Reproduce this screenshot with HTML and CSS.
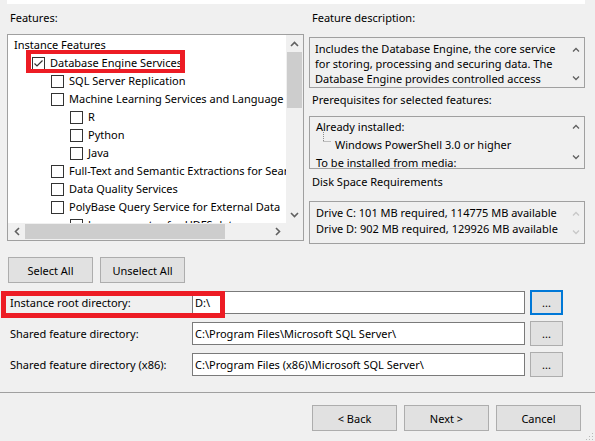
FILE: index.html
```html
<!DOCTYPE html>
<html>
<head>
<meta charset="utf-8">
<link rel="stylesheet" href="styles.css">
</head>
<body>
<div class="window">
  <div class="topband"></div>
  <div class="panes">
    <div class="left">
      <div class="label lbl-features">Features:</div>
      <div class="tree">
        <div class="tree-content">
          <div class="row lvl0">Instance Features</div>
          <div class="row lvl1"><span class="cb"><svg width="13" height="13" viewBox="0 0 13 13"><polyline points="2.5,6.5 5,9 10.5,3.5" fill="none" stroke="#333" stroke-width="1.2"/></svg></span>Database Engine Services</div>
          <div class="row lvl2"><span class="cb"></span>SQL Server Replication</div>
          <div class="row lvl2"><span class="cb"></span>Machine Learning Services and Language Extensions</div>
          <div class="row lvl3"><span class="cb"></span>R</div>
          <div class="row lvl3"><span class="cb"></span>Python</div>
          <div class="row lvl3"><span class="cb"></span>Java</div>
          <div class="row lvl2"><span class="cb"></span>Full-Text and Semantic Extractions for Search</div>
          <div class="row lvl2"><span class="cb"></span>Data Quality Services</div>
          <div class="row lvl2"><span class="cb"></span>PolyBase Query Service for External Data</div>
          <div class="row lvl3"><span class="cb"></span>Java connector for HDFS data sources</div>
        </div>
        <div class="vscroll">
          <div class="sbtn"><svg width="9" height="6" viewBox="0 0 9 6"><polyline points="1,5 4.5,1.5 8,5" fill="none" stroke="#606060" stroke-width="1.6"/></svg></div>
          <div class="vtrack"><div class="vthumb"></div></div>
          <div class="sbtn"><svg width="9" height="6" viewBox="0 0 9 6"><polyline points="1,1 4.5,4.5 8,1" fill="none" stroke="#606060" stroke-width="1.6"/></svg></div>
        </div>
        <div class="hscroll">
          <div class="sbtn"><svg width="6" height="9" viewBox="0 0 6 9"><polyline points="5,1 1.5,4.5 5,8" fill="none" stroke="#606060" stroke-width="1.6"/></svg></div>
          <div class="htrack"><div class="hthumb"></div></div>
          <div class="sbtn"><svg width="6" height="9" viewBox="0 0 6 9"><polyline points="1,1 4.5,4.5 1,8" fill="none" stroke="#606060" stroke-width="1.6"/></svg></div>
        </div>
        <div class="corner"></div>
      </div>
    </div>
    <div class="right">
      <div class="label lbl-desc">Feature description:</div>
      <div class="box box-desc">
        <div class="box-text">Includes the Database Engine, the core service<br>for storing, processing and securing data. The<br>Database Engine provides controlled access</div>
        <div class="arrows">
          <svg width="8" height="5" viewBox="0 0 8 5"><polyline points="1,4.5 4,1.5 7,4.5" fill="none" stroke="#606060" stroke-width="1.3"/></svg>
          <svg width="8" height="5" viewBox="0 0 8 5"><polyline points="1,0.5 4,3.5 7,0.5" fill="none" stroke="#606060" stroke-width="1.3"/></svg>
        </div>
      </div>
      <div class="label lbl-prereq">Prerequisites for selected features:</div>
      <div class="box box-prereq">
        <div class="box-text">
          <div class="pr-row">Already installed:</div>
          <div class="pr-row pr-child"><svg class="dots" width="12" height="18" viewBox="0 0 12 18"><path d="M3.5 0 V9.5 M3.5 9.5 H11" fill="none" stroke="#8a8a8a" stroke-width="1" stroke-dasharray="1 1"/></svg>Windows PowerShell 3.0 or higher</div>
          <div class="pr-row">To be installed from media:</div>
        </div>
        <div class="arrows arrows-prereq">
          <svg width="8" height="5" viewBox="0 0 8 5"><polyline points="1,4.5 4,1.5 7,4.5" fill="none" stroke="#606060" stroke-width="1.3"/></svg>
          <svg width="8" height="5" viewBox="0 0 8 5"><polyline points="1,0.5 4,3.5 7,0.5" fill="none" stroke="#606060" stroke-width="1.3"/></svg>
        </div>
      </div>
      <div class="label lbl-disk">Disk Space Requirements</div>
      <div class="box box-disk">
        <div class="box-text">Drive C: 101 MB required, 114775 MB available<br>Drive D: 902 MB required, 129926 MB available</div>
        <div class="arrows arrows-disk">
          <svg width="8" height="5" viewBox="0 0 8 5"><polyline points="1,4.5 4,1.5 7,4.5" fill="none" stroke="#c8c8c8" stroke-width="1.3"/></svg>
          <svg width="8" height="5" viewBox="0 0 8 5"><polyline points="1,0.5 4,3.5 7,0.5" fill="none" stroke="#c8c8c8" stroke-width="1.3"/></svg>
        </div>
      </div>
    </div>
  </div>

  <div class="select-row">
    <button class="btn">Select All</button>
    <button class="btn">Unselect All</button>
  </div>

  <div class="dirs">
    <div class="dir-row">
      <div class="dir-label">Instance root directory:</div>
      <div class="input">D:\</div>
      <button class="btn browse focused">...</button>
    </div>
    <div class="dir-row">
      <div class="dir-label">Shared feature directory:</div>
      <div class="input">C:\Program Files\Microsoft SQL Server\</div>
      <button class="btn browse">...</button>
    </div>
    <div class="dir-row">
      <div class="dir-label">Shared feature directory (x86):</div>
      <div class="input">C:\Program Files (x86)\Microsoft SQL Server\</div>
      <button class="btn browse">...</button>
    </div>
  </div>

  <div class="separator"></div>

  <div class="footer">
    <button class="btn">&lt; Back</button>
    <button class="btn">Next &gt;</button>
    <button class="btn">Cancel</button>
  </div>

  <div class="mark mark-engine"></div>
  <div class="mark mark-root"></div>
  <svg class="grip" width="8" height="8" viewBox="0 0 8 8"><g fill="#b8b8b8"><rect x="6" y="0" width="1" height="1"/><rect x="3" y="3" width="1" height="1"/><rect x="6" y="3" width="1" height="1"/><rect x="0" y="6" width="1" height="1"/><rect x="3" y="6" width="1" height="1"/><rect x="6" y="6" width="1" height="1"/></g></svg>
</div>
</body>
</html>
```

FILE: styles.css
```css
* { box-sizing: border-box; }
html, body { margin: 0; padding: 0; }
body {
  background: #f0f0f0;
  font-family: "Noto Sans", "Open Sans", sans-serif;
  font-size: 11px;
  color: #000;
}
.window {
  position: relative;
  width: 595px;
  height: 441px;
  overflow: hidden;
  background: #f0f0f0;
}
.topband {
  margin-left: 7px;
  width: 578px;
  height: 4px;
  background: #fff;
}
.panes {
  display: flex;
  gap: 5px;
  padding-left: 7px;
}
.left { width: 297px; }
.right { width: 276px; }
.label {
  line-height: 16px;
  padding-left: 3px;
  white-space: nowrap;
}
.lbl-features { height: 30px; padding-top: 6px; }
.lbl-desc { height: 33px; padding-top: 6px; }
.lbl-prereq { height: 28px; padding-top: 4px; }
.lbl-disk { height: 32px; padding-top: 5px; }

/* tree */
.tree {
  height: 207px;
  border: 1px solid #a0a0a0;
  background: #fff;
  display: grid;
  grid-template-columns: 1fr 17px;
  grid-template-rows: 1fr 17px;
}
.tree-content {
  overflow: hidden;
  padding-top: 0;
}
.row {
  height: 18px;
  display: flex;
  align-items: center;
  white-space: nowrap;
}
.lvl0 { padding-left: 6px; }
.lvl1 { padding-left: 24px; }
.lvl2 { padding-left: 43px; }
.lvl3 { padding-left: 62px; }
.cb {
  flex: none;
  width: 13px;
  height: 13px;
  border: 1px solid #333;
  background: #fff;
  margin-right: 5px;
  position: relative;
  top: 1px;
}
.cb svg { display: block; margin: -1px 0 0 -1px; }
.vscroll {
  background: #f0f0f0;
  display: flex;
  flex-direction: column;
}
.sbtn {
  flex: none;
  width: 17px;
  height: 17px;
  display: flex;
  align-items: center;
  justify-content: center;
}
.vtrack { flex: 1; padding: 0 1px; }
.vthumb { margin-top: 0; height: 56px; background: #cdcdcd; }
.hscroll {
  background: #f0f0f0;
  display: flex;
}
.htrack { flex: 1; padding: 1px 0; }
.hthumb { width: 200px; height: 100%; background: #cdcdcd; }
.corner { background: #f0f0f0; }

/* right boxes */
.box {
  border: 1px solid #a0a0a0;
  background: #f0f0f0;
  display: flex;
}
.box-text {
  flex: 1;
  overflow: hidden;
  white-space: nowrap;
}
.box-desc { height: 51px; }
.box-desc .box-text { padding: 3px 0 0 5px; line-height: 15px; }
.box-prereq { height: 53px; }
.box-prereq .box-text { padding: 1px 0 0 6px; }
.pr-row { height: 18px; line-height: 18px; display: flex; align-items: center; }
.pr-child { padding-left: 4px; }
.dots { flex: none; margin-right: 3px; margin-top: -8px; }
.box-disk { height: 43px; }
.box-disk .box-text { padding: 3px 0 0 6px; line-height: 16px; }
.arrows {
  flex: none;
  width: 17px;
  display: flex;
  flex-direction: column;
  justify-content: space-between;
  align-items: center;
  padding: 9px 0 6px;
}
.arrows svg { display: block; }
.arrows-prereq { padding: 7px 0 8px; }
.arrows-disk { padding: 9px 0 8px; }

/* buttons */
.btn {
  font-family: inherit;
  font-size: 11px;
  color: #000;
  background: #e1e1e1;
  border: 1px solid #adadad;
  border-radius: 0;
  padding: 0;
  margin: 0;
  height: 26px;
  width: 85px;
}
.select-row {
  display: flex;
  gap: 7px;
  padding-left: 8px;
  margin-top: 13px;
}
.dirs {
  margin-top: 7px;
  display: flex;
  flex-direction: column;
  gap: 6px;
}
.dir-row {
  display: flex;
  align-items: center;
  height: 25px;
}
.dir-label {
  width: 192px;
  padding-left: 10px;
  white-space: nowrap;
}
.input {
  width: 333px;
  height: 23px;
  border: 1px solid #7a7a7a;
  background: #fff;
  padding-left: 2px;
  line-height: 21px;
  white-space: nowrap;
  overflow: hidden;
}
.browse {
  margin-left: 5px;
  width: 33px;
  height: 25px;
  line-height: 20px;
}
.browse.focused { border: 2px solid #0078d7; }
.separator {
  margin-top: 15px;
  height: 1px;
  background: #a0a0a0;
}
.footer {
  margin-top: 12px;
  display: flex;
  justify-content: flex-end;
  gap: 7px;
  padding-right: 14px;
}

/* annotation marks */
.mark {
  position: absolute;
  border: 5px solid #ed1c24;
}
.mark-engine { left: 26px; top: 50px; width: 159px; height: 23px; border-width: 4px 5px; }
.mark-root { left: 1px; top: 291px; width: 224px; height: 27px; }
.grip { position: absolute; right: 1px; bottom: 0; }
```
